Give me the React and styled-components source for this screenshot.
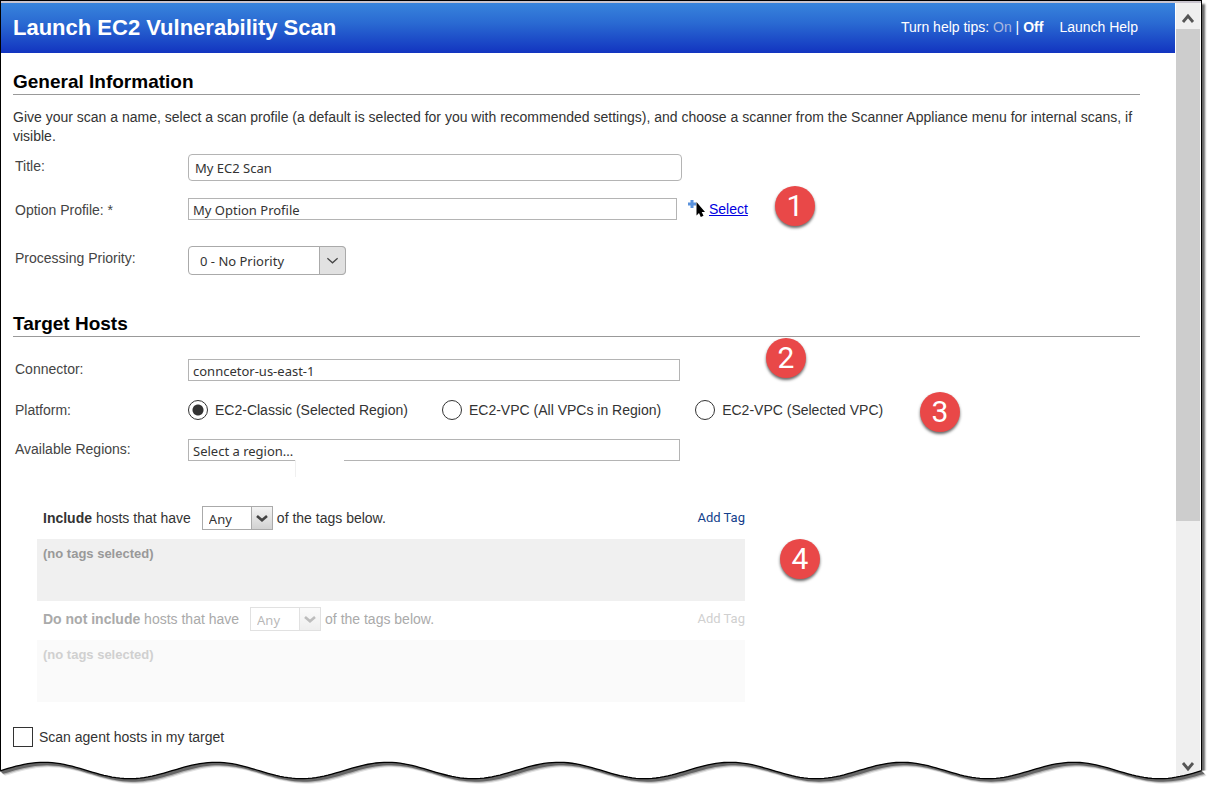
import React from "react";
import styled, { createGlobalStyle, css } from "styled-components";

const GlobalStyle = createGlobalStyle`
  *, *::before, *::after { box-sizing: border-box; }
  body {
    margin: 0;
    background: #fff;
    color: #333;
    font: 14px/20px "Liberation Sans", Arial, sans-serif;
  }
`;

const uiFont = `"Noto Sans", Tahoma, sans-serif`;

const Frame = styled.div`
  position: relative;
  display: flex;
  margin-right: 10px;
  padding-top: 2px;
  border: 1px solid #000;
  border-bottom: 0;
  background: #fff;
  box-shadow: inset 0 2px 0 #c9c5cf, 3px 4px 2px #666;
`;

const Page = styled.div`
  flex: 1;
  min-width: 0;
`;

const Header = styled.header`
  display: flex;
  align-items: center;
  justify-content: space-between;
  height: 50px;
  padding: 0 37px 0 12px;
  background: linear-gradient(#3884dc, #2a6ad2 40%, #1234c0);
  color: #fff;
`;

const PageTitle = styled.h1`
  margin: 0;
  font-size: 22px;
  line-height: 26px;
`;

const HelpNav = styled.nav`
  display: flex;
  gap: 16px;
  padding-bottom: 2px;
`;

const HelpLink = styled.a`
  color: ${(p) => (p.$muted ? "#a9b9e0" : "#fff")};
  font-weight: ${(p) => (p.$bold ? "bold" : "normal")};
  text-decoration: none;
`;

const Form = styled.form`
  padding: 18px 35px 43px 12px;
`;

const SectionTitle = styled.h2`
  margin: ${(p) => (p.$spaced ? "38px" : "0")} 0 0;
  padding-bottom: 1px;
  border-bottom: 1px solid #999;
  color: #000;
  font-size: 19px;
  line-height: 22px;
`;

const Intro = styled.p`
  margin: 13px -16px 0 0;
  line-height: 19px;
`;

const Row = styled.div`
  position: relative;
  display: grid;
  grid-template-columns: 173px 1fr;
  align-items: start;
  margin-top: ${(p) => p.$gap}px;
  padding-left: 2px;
`;

const labelStyle = css`
  color: #444;
  padding-top: ${(p) => (p.$low ? "2px" : "0")};
`;

const Label = styled.label`
  ${labelStyle}
`;

const LabelText = styled.span`
  ${labelStyle}
`;

const Control = styled.div`
  display: flex;
  align-items: center;
`;

const TextInput = styled.input`
  width: ${(p) => p.$width}px;
  max-width: 100%;
  height: 22px;
  margin: 0;
  padding: 2px 4px 0;
  border: 1px solid #b4b4b4;
  background: #fff;
  color: #333;
  font: 13px/18px ${uiFont};
  outline: 0;
  ${(p) =>
    p.$rounded &&
    css`
      height: 27px;
      padding: 0 6px;
      border-radius: 4px;
    `}
`;

const SelectLink = styled.a`
  display: inline-flex;
  align-items: center;
  gap: 4px;
  margin-left: 11px;
  color: #0000e0;
`;

const Callout = styled.span`
  position: absolute;
  left: ${(p) => p.$left}px;
  top: ${(p) => p.$top}px;
  width: 40px;
  height: 40px;
  border-radius: 50%;
  background: #e94848;
  box-shadow: 0 2px 3px rgba(0, 0, 0, 0.6);
  color: #fff;
  font: 30px/40px Roboto, sans-serif;
  text-align: center;
`;

const SelectBox = styled.span`
  position: relative;
  display: inline-flex;
  width: ${(p) => (p.$large ? "158px" : "71px")};
  height: ${(p) => (p.$large ? "29px" : "24px")};
  margin: ${(p) => (p.$large ? "0" : "0 4px 0 11px")};

  select {
    appearance: none;
    width: 100%;
    margin: 0;
    padding: ${(p) => (p.$large ? "1px 28px 0 11px" : "2px 22px 0 6px")};
    border: 1px solid #aaa;
    border-radius: ${(p) => (p.$large ? "4px" : "0")};
    background: #fff;
    color: #333;
    font: 13px/18px ${uiFont};
    opacity: 1;
  }

  svg {
    position: absolute;
    top: 0;
    right: 0;
    width: ${(p) => (p.$large ? "27px" : "22px")};
    height: 100%;
    padding: ${(p) => (p.$large ? "7px 6px" : "4px 3px")};
    border: 1px solid #aaa;
    border-radius: ${(p) => (p.$large ? "0 4px 4px 0" : "0")};
    background: ${(p) => (p.$large ? "#e1e1e1" : "linear-gradient(#f4f4f4, #d2d2d2)")};
    pointer-events: none;
  }
`;

const RegionField = styled.div`
  position: relative;

  &::after {
    content: "";
    position: absolute;
    left: 107px;
    top: 21px;
    width: 49px;
    height: 17px;
    border-left: 1px solid #f0f0f0;
    background: #fff;
  }
`;

const Radios = styled.div`
  display: flex;
  gap: 34px;
`;

const Choice = styled.label`
  display: flex;
  align-items: center;
  width: fit-content;
  gap: ${(p) => p.$gap}px;
`;

const Radio = styled.input`
  appearance: none;
  width: 20px;
  height: 20px;
  margin: 0;
  border: 1px solid #333;
  border-radius: 50%;
  background: #fff;

  &:checked {
    background: radial-gradient(circle, #333 5px, #fff 6px);
  }
`;

const Checkbox = styled.input`
  appearance: none;
  width: 20px;
  height: 20px;
  margin: 0;
  border: 1px solid #333;
  background: #fff;

  &:checked {
    box-shadow: inset 0 0 0 4px #fff;
    background: #333;
  }
`;

const TagSection = styled.section`
  position: relative;
  max-width: 708px;
  margin: 45px 0 25px 24px;
`;

const TagHead = styled.div`
  display: flex;
  align-items: center;
  justify-content: space-between;
  margin-bottom: 9px;
  padding-left: 6px;
`;

const TagSentence = styled.div`
  display: flex;
  align-items: center;
  height: 24px;
  white-space: pre;
`;

const AddTag = styled.button`
  margin: 0;
  padding: 0;
  border: 0;
  background: none;
  color: #143f8c;
  font: 13px/20px Roboto, sans-serif;
`;

const TagPanel = styled.div`
  height: 62px;
  padding: 5px 6px;
  background: #f0f0f0;
  color: #999;
  font-size: 13px;
  font-weight: bold;
`;

const TagGroup = styled.div`
  & + & {
    margin-top: 6px;
  }
  ${(p) =>
    p.$inactive &&
    css`
      ${TagSentence} { color: #aaa; }
      ${TagPanel} { background: #fafafa; color: #d0d0d0; }
      ${SelectBox} { opacity: 0.35; }
      ${AddTag} { color: #d0d0d0; }
    `}
`;

const ScrollBar = styled.aside`
  display: flex;
  flex-direction: column;
  width: 24px;
  margin: 0 1px;
  padding-bottom: 12px;
  background: #efefef;
`;

const ScrollButton = styled.button`
  display: flex;
  align-items: center;
  justify-content: center;
  height: 26px;
  margin: 0;
  padding: 3px 0 0;
  border: 0;
  background: none;
`;

const ScrollTrack = styled.div`
  flex: 1;
`;

const ScrollThumb = styled.div`
  height: 68%;
  background: #cdcdcd;
`;

const TornEdge = styled.svg`
  position: absolute;
  left: -1px;
  bottom: 0;
  width: calc(100% + 12px);
  height: 35px;
  pointer-events: none;
`;

const edgePoints = (shift) =>
  Array.from({ length: 302 }, (_, i) => Math.min(i * 4, 1201.5)).map((x) => [
    x + shift,
    15.5 - 8.2 * Math.cos((2 * Math.PI * (x - 44)) / 171.6) + shift,
  ]);
const toText = (points) => points.map((p) => p.map((n) => n.toFixed(2)).join(",")).join(" ");
const edge = edgePoints(0);
const band = (shift) => toText([...edge, ...edgePoints(shift).reverse()]);

function Torn() {
  return (
    <TornEdge viewBox="0 0 1212 35" preserveAspectRatio="none" aria-hidden="true">
      <polygon points={`${toText(edge)} 1212,15 1212,35 0,35`} fill="#fff" />
      <polygon points={band(5)} fill="#e4e4e4" />
      <polygon points={band(4)} fill="#b4b4b4" />
      <polygon points={band(3)} fill="#666" />
      <polyline points={toText(edge)} fill="none" stroke="#000" strokeWidth="1.3" />
    </TornEdge>
  );
}

function CursorIcon() {
  return (
    <svg width="17" height="18" viewBox="0 0 17 18" aria-hidden="true">
      <path d="M2.500 0h3v2.500H8v3H5.500V8h-3V5.500H0v-3h2.500z" fill="#5a92dc" />
      <path d="M8.500 2v13.500l2.500-2.500 1.800 4 2.700-1.200-1.800-3.800h3.300z" fill="#000" />
    </svg>
  );
}

function PickList({ id, label, options, large, disabled }) {
  return (
    <SelectBox $large={large}>
      <select id={id} aria-label={label} disabled={disabled}>
        {options.map((o) => (
          <option key={o}>{o}</option>
        ))}
      </select>
      {large ? (
        <svg viewBox="0 0 14 14" fill="none" stroke="#444" strokeWidth="1.300">
          <path d="M1.500 4.500 7 9.500l5.500-5" />
        </svg>
      ) : (
        <svg viewBox="0 0 14 14" fill="none" stroke="#444" strokeWidth="2.600">
          <path d="M2 5l5 4.300L12 5" />
        </svg>
      )}
    </SelectBox>
  );
}

function Chevron({ d }) {
  return (
    <svg width="14" height="12" viewBox="0 0 14 12" fill="none" stroke="#555" strokeWidth="2.800">
      <path d={d} />
    </svg>
  );
}

const platforms = [
  "EC2-Classic (Selected Region)",
  "EC2-VPC (All VPCs in Region)",
  "EC2-VPC (Selected VPC)",
];

function Tags({ lead, inactive }) {
  return (
    <TagGroup $inactive={inactive}>
      <TagHead>
        <TagSentence>
          <b>{lead}</b> hosts that have
          <PickList label={`${lead} match`} options={["Any", "All"]} disabled={inactive} />
          of the tags below.
        </TagSentence>
        <AddTag type="button" disabled={inactive}>Add Tag</AddTag>
      </TagHead>
      <TagPanel>(no tags selected)</TagPanel>
    </TagGroup>
  );
}

export default function App() {
  return (
    <>
      <GlobalStyle />
      <Frame>
        <Page>
          <Header>
            <PageTitle>Launch EC2 Vulnerability Scan</PageTitle>
            <HelpNav>
              <span>
                Turn help tips: <HelpLink href="#on" $muted>On</HelpLink> |{" "}
                <HelpLink href="#off" $bold>Off</HelpLink>
              </span>
              <HelpLink href="#help">Launch Help</HelpLink>
            </HelpNav>
          </Header>
          <Form>
            <SectionTitle>General Information</SectionTitle>
            <Intro>
              Give your scan a name, select a scan profile (a default is selected for you with
              recommended settings), and choose a scanner from the Scanner Appliance menu for
              internal scans, if visible.
            </Intro>
            <Row $gap={8}>
              <Label $low htmlFor="title">Title:</Label>
              <Control>
                <TextInput id="title" $width={494} $rounded defaultValue="My EC2 Scan" />
              </Control>
            </Row>
            <Row $gap={17}>
              <Label $low htmlFor="profile">Option Profile: *</Label>
              <Control>
                <TextInput id="profile" $width={489} defaultValue="My Option Profile" />
                <SelectLink href="#select">
                  <CursorIcon />
                  Select
                </SelectLink>
              </Control>
              <Callout $left={762} $top={-12}>1</Callout>
            </Row>
            <Row $gap={26}>
              <Label $low htmlFor="priority">Processing Priority:</Label>
              <Control>
                <PickList id="priority" large options={["0 - No Priority", "1 - Emergency"]} />
              </Control>
            </Row>

            <SectionTitle $spaced>Target Hosts</SectionTitle>
            <Row $gap={22}>
              <Label htmlFor="connector">Connector:</Label>
              <Control>
                <TextInput id="connector" $width={492} defaultValue="conncetor-us-east-1" />
              </Control>
              <Callout $left={753} $top={-21}>2</Callout>
            </Row>
            <Row $gap={19} role="radiogroup" aria-labelledby="platform">
              <LabelText id="platform">Platform:</LabelText>
              <Radios>
                {platforms.map((name, i) => (
                  <Choice key={name} $gap={7}>
                    <Radio type="radio" name="platform" defaultChecked={i === 0} />
                    {name}
                  </Choice>
                ))}
              </Radios>
              <Callout $left={907} $top={-8}>3</Callout>
            </Row>
            <Row $gap={19}>
              <Label htmlFor="region">Available Regions:</Label>
              <RegionField>
                <Control>
                  <TextInput id="region" $width={492} defaultValue="Select a region..." />
                </Control>
              </RegionField>
            </Row>

            <TagSection>
              <Tags lead="Include" />
              <Tags lead="Do not include" inactive />
              <Callout $left={743} $top={33}>4</Callout>
            </TagSection>

            <Choice $gap={6}>
              <Checkbox type="checkbox" />
              Scan agent hosts in my target
            </Choice>
          </Form>
        </Page>
        <ScrollBar>
          <ScrollButton type="button" aria-label="Scroll up">
            <Chevron d="M2 10l5-6 5 6" />
          </ScrollButton>
          <ScrollTrack>
            <ScrollThumb />
          </ScrollTrack>
          <ScrollButton type="button" aria-label="Scroll down">
            <Chevron d="M2 2l5 6 5-6" />
          </ScrollButton>
        </ScrollBar>
        <Torn />
      </Frame>
    </>
  );
}
